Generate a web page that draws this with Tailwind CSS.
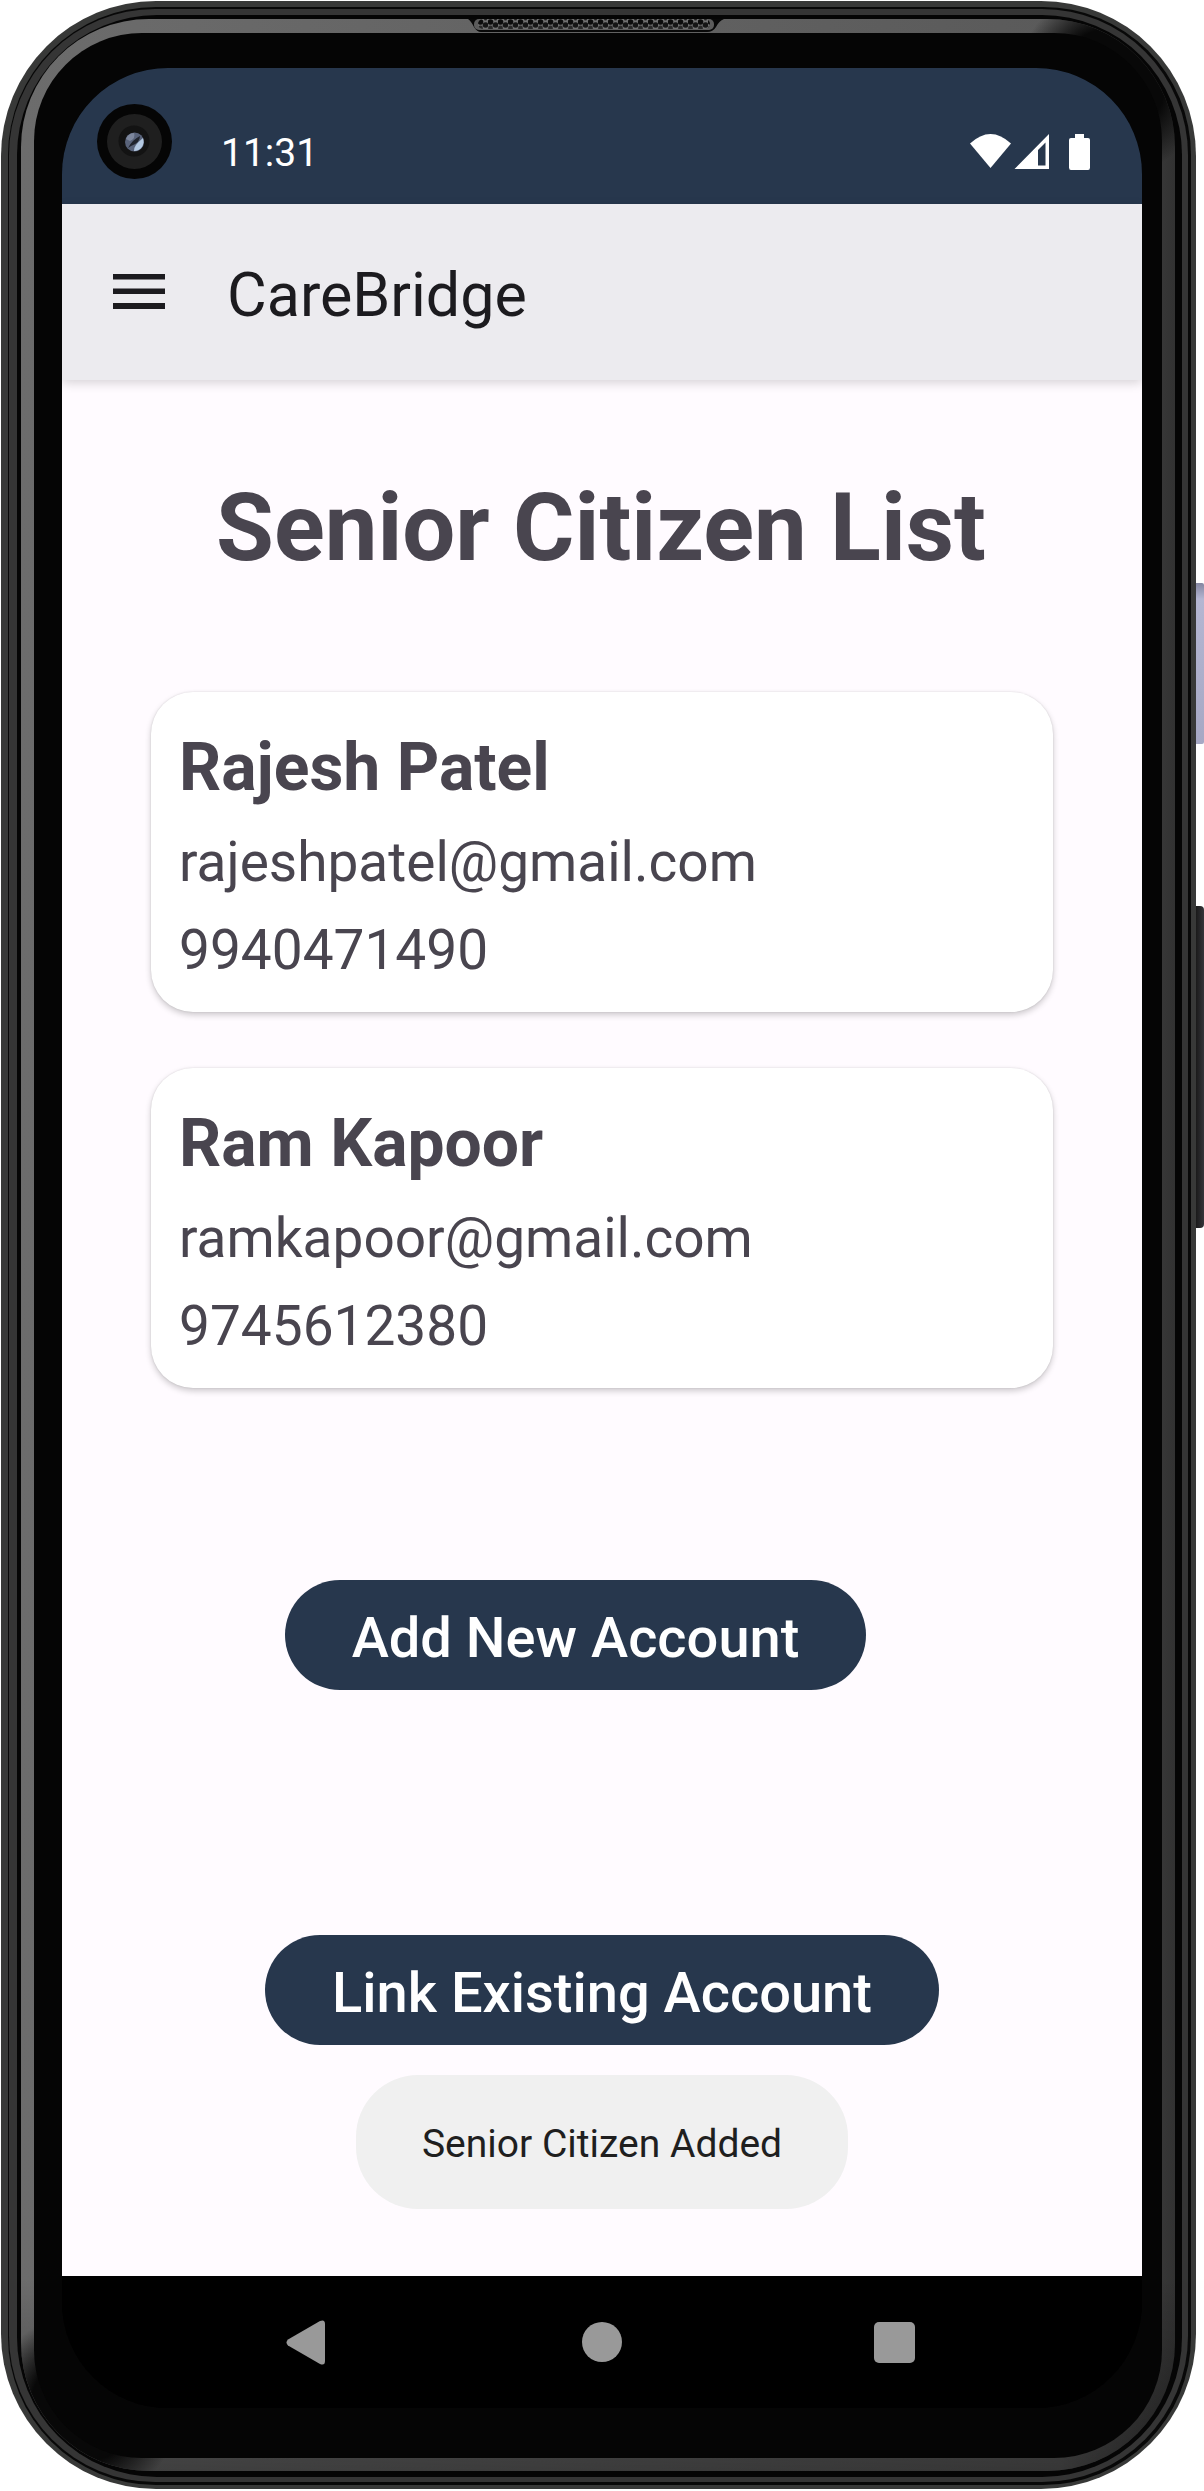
<!DOCTYPE html>
<html lang="en">
<head>
<meta charset="utf-8">
<meta name="viewport" content="width=device-width, initial-scale=1">
<title>CareBridge</title>
<script src="https://cdn.jsdelivr.net/npm/@tailwindcss/browser@4"></script>
</head>
<body class="bg-white font-['Roboto',sans-serif] text-[#49454f]">
<!-- Phone shell: nested rings of the metal frame, then the bezel -->
<div class="relative flex min-h-screen flex-col pt-px pr-2 pb-0.5 pl-px">
  <div class="absolute top-[583px] right-0 h-[161px] w-2 rounded-r-xs bg-linear-to-b from-[#8486a0] via-[#b4b6d2] via-10% to-[#a6a8c4]"></div>
  <div class="absolute top-[906px] right-0 h-[322px] w-2 rounded-r-sm bg-linear-to-r from-[#1a1a1a] to-[#35353a]"></div>
  <div class="relative flex flex-1 flex-col rounded-[155px] bg-[#383938] pt-1.5 pr-[5px] pb-1 pl-[7px]">
  <div class="flex flex-1 flex-col rounded-[148px] bg-[#080808] pt-0.5 pr-[3px] pb-[3px] pl-px">
  <div class="flex flex-1 flex-col rounded-[146px] bg-[#353535] pt-1.5 pr-1.5 pb-[5px] pl-2">
  <div class="flex flex-1 flex-col rounded-[140px] bg-[#050505] pt-1 pr-[7px] pb-1.5 pl-1">
  <div class="relative flex flex-1 flex-col overflow-hidden rounded-[128px] bg-linear-to-r from-[#6c6c6c] via-[#5a5a5a] via-90% to-[#323232] pt-3.5 pr-[13px] pb-[13px] pl-[13px]">
    <div class="absolute inset-x-0 bottom-0 h-48 bg-linear-to-t from-black/40 to-transparent"></div>
    <div class="absolute -top-8 -right-8 size-48 bg-radial from-[#080808] from-40% to-transparent to-70%"></div>
    <div class="absolute -bottom-8 -left-8 size-48 bg-radial from-[#080808] from-40% to-transparent to-70%"></div>
    <svg class="absolute top-0 left-1/2 h-3.5 w-[260px] -translate-x-1/2" viewBox="0 0 260 14" aria-hidden="true">
      <defs>
        <pattern id="mesh" width="10" height="10" patternUnits="userSpaceOnUse">
          <rect width="10" height="10" fill="#707070"/>
          <circle cx="2.500" cy="3" r="2.800" fill="#0c0c0c"/><circle cx="7.500" cy="6" r="2.800" fill="#151515"/>
          <circle cx="2.500" cy="9" r="2.400" fill="#2a2a2a"/><circle cx="7.500" cy="0" r="1.500" fill="#222"/>
        </pattern>
      </defs>
      <path d="M0 0H256Q251 2 248 8Q245 13 239 13H13Q9 13 6 8Q3 2 0 0Z" fill="#080808"/>
      <rect x="6" y="0" width="240" height="11" rx="5" fill="#5c5c5c"/>
      <rect x="10" y="0" width="232" height="10" rx="5" fill="url(#mesh)"/>
    </svg>
  <div class="relative flex flex-1 flex-col rounded-[108px] bg-[#050505] pt-[35px] pr-5 pb-[50px] pl-7">

    <!-- Display -->
    <div class="relative flex flex-1 flex-col overflow-hidden rounded-[106px] bg-black">
      <div class="flex h-[136px] items-center justify-between bg-[#27374d] pt-8 pr-[52px] pl-[159px] text-white">
        <svg class="absolute top-9 left-[35px] size-[75px]" viewBox="0 0 75 75" aria-hidden="true">
          <circle cx="37.500" cy="37.500" r="37.500" fill="#050505"/>
          <circle cx="37.500" cy="37.500" r="27.500" fill="#1f1f1f"/>
          <circle cx="37" cy="37" r="15.500" fill="#131313"/>
          <circle cx="37.500" cy="38" r="9.500" fill="#59637a"/>
          <path d="M29 35A9 9 0 0 1 37 29Q39 34 33 37Z" fill="#7d879d"/>
          <path d="M46 34A9.500 9.500 0 0 1 37 47Q36 42 46 34Z" fill="#b4c9e2"/>
          <path d="M31 44Q35 36 43 32Q43 39 34 42Z" fill="#20242d"/>
        </svg>
        <time class="pt-0.5 text-[39px] leading-[44px]">11:31</time>
        <svg class="h-9 w-[120px]" viewBox="0 0 120 36" fill="#fff" aria-label="Wi-Fi, mobile signal, battery" role="img">
          <path d="M0 9.500Q20.500-9.500 41 9.500L20.500 34Z"/>
          <path d="M44.500 35L79 0V35ZM68 16V31.500H75.500V8.500Z" fill-rule="evenodd"/>
          <path d="M105 0H114V4H118Q120 4 120 6V33.500Q120 36 118 36H101Q99 36 99 33.500V6Q99 4 101 4H105Z"/>
        </svg>
      </div>

      <header class="relative z-10 flex h-44 items-center gap-[62px] bg-[#ecebef] px-[51px] shadow-[0_3px_10px_rgba(0,0,0,0.16)]">
        <button type="button" aria-label="Open menu" class="flex size-[52px] items-start pt-2">
          <svg class="h-[35px] w-[52px]" viewBox="0 0 52 35" fill="#1c1b1f" aria-hidden="true"><path d="M0 0H52V5.500H0ZM0 14.500H52V20H0ZM0 29H52V35H0Z"/></svg>
        </button>
        <span class="pt-1.5 text-[61px] leading-[72px] text-[#1c1b1f]">CareBridge</span>
      </header>

      <main class="flex flex-1 flex-col items-center bg-[#fffbff] px-[89px] pt-[92px] pb-[231px]">
        <h1 class="mr-0.5 text-[94px] leading-[112px] font-bold whitespace-nowrap">Senior Citizen List</h1>
        <ul class="mt-[108px] flex w-full flex-col gap-14">
          <li class="rounded-[42px] bg-white px-7 pt-[26px] pb-[18px] shadow-[0_3px_6px_rgba(0,0,0,0.2),0_0_2px_rgba(0,0,0,0.12)]">
            <h2 class="text-[66px] leading-[100px] font-bold">Rajesh Patel</h2>
            <p class="text-[55px] leading-[88px]">rajeshpatel@gmail.com</p>
            <p class="text-[55px] leading-[88px]">9940471490</p>
          </li>
          <li class="rounded-[42px] bg-white px-7 pt-[26px] pb-[18px] shadow-[0_3px_6px_rgba(0,0,0,0.2),0_0_2px_rgba(0,0,0,0.12)]">
            <h2 class="text-[66px] leading-[100px] font-bold">Ram Kapoor</h2>
            <p class="text-[55px] leading-[88px]">ramkapoor@gmail.com</p>
            <p class="text-[55px] leading-[88px]">9745612380</p>
          </li>
        </ul>
        <button type="button" class="mt-48 mr-[53px] h-[110px] w-[581px] rounded-full bg-[#27374d] pt-1.5 text-[56px] leading-[64px] font-medium whitespace-nowrap text-white">Add New Account</button>
        <button type="button" class="mt-[245px] h-[110px] w-[674px] rounded-full bg-[#27374d] pt-1.5 text-[56px] leading-[64px] font-medium whitespace-nowrap text-white">Link Existing Account</button>
      </main>

      <div role="status" class="absolute bottom-[199px] left-1/2 flex h-[134px] w-[492px] -translate-x-1/2 items-center justify-center rounded-[62px] bg-[#f0f0f0] pt-1 text-[39px] leading-[46px] whitespace-nowrap text-[#1f1f1f]">Senior Citizen Added</div>

      <nav class="flex h-[132px] items-center justify-between bg-black pr-[216px] pl-[211px]" aria-label="System navigation">
        <button type="button" aria-label="Back" class="flex size-16 items-center justify-center">
          <svg class="h-[45px] w-[39px]" viewBox="0 0 39 45" fill="#999" aria-hidden="true"><path d="M2 19.500L34 1Q39-1 39 4V41Q39 46 34 44L2 25.500Q-1 22.500 2 19.500Z"/></svg>
        </button>
        <button type="button" aria-label="Home" class="ml-1 flex size-16 items-center justify-center"><span class="size-10 rounded-full bg-[#999]"></span></button>
        <button type="button" aria-label="Recent apps" class="flex size-16 items-center justify-center"><span class="size-[41px] rounded-[5px] bg-[#999]"></span></button>
      </nav>
    </div>

  </div>
  </div>
  </div>
  </div>
  </div>
  </div>
</div>
</body>
</html>
